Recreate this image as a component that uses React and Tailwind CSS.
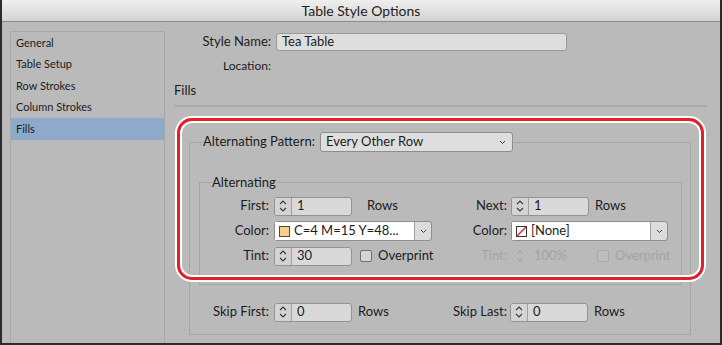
import React from 'react';

function UpDown({ disabled }) {
  const c = disabled ? '#a4a4a4' : '#3a3a3a';
  return (
    <svg width="8" height="14" viewBox="0 0 8 14" fill="none" stroke={c} strokeWidth="1.1">
      <path d="M1 5 L4 2 L7 5" />
      <path d="M1 9 L4 12 L7 9" />
    </svg>
  );
}

function ChevronDown() {
  return (
    <svg width="7" height="5" viewBox="0 0 7 5" fill="none" stroke="#444" strokeWidth="1">
      <path d="M1 1 L3.5 3.5 L6 1" />
    </svg>
  );
}

function Spinner({ value }) {
  return (
    <div className="flex h-[19px] w-[78px] overflow-hidden rounded-[3px] border border-[#939393] bg-[#d9d9d9]">
      <div className="flex w-[17px] items-center justify-center border-r border-[#a0a0a0] bg-[#d3d3d3]">
        <UpDown />
      </div>
      <div className="flex items-center pl-[5px]">{value}</div>
    </div>
  );
}

function Checkbox({ label, disabled }) {
  return (
    <div className={`flex items-center gap-[6px] ${disabled ? 'text-[#a3a3a3]' : ''}`}>
      <div
        className={`h-[12px] w-[12px] rounded-[2px] border ${
          disabled ? 'border-[#a9a9a9] bg-[#bdbdbd]' : 'border-[#707070] bg-[#d6d6d6]'
        }`}
      />
      {label}
    </div>
  );
}

function ColorSelect({ swatch, text, width, fieldWidth }) {
  return (
    <div className="flex h-[20px] rounded-[3px] border border-[#8e8e8e]" style={{ width }}>
      <div className="flex items-center gap-[4px] bg-white pl-[4px]" style={{ width: fieldWidth }}>
        {swatch}
        <span>{text}</span>
      </div>
      <div className="flex flex-1 items-center justify-center rounded-r-[3px] border-l border-[#a2a2a2] bg-[#dcdcdc]">
        <ChevronDown />
      </div>
    </div>
  );
}

const Label = ({ children, muted }) => (
  <div className={`w-[69px] text-right ${muted ? 'text-[#a3a3a3]' : ''}`}>{children}</div>
);

const navItems = ['General', 'Table Setup', 'Row Strokes', 'Column Strokes', 'Fills'];

export default function App() {
  return (
    <div className="relative flex h-[345px] w-[722px] flex-col border-x-2 border-b-2 border-[#2b2b2b] bg-[#bababa] font-[Lato,sans-serif] text-[13px] text-[#1c1c1c]">
      <div className="flex h-[22px] shrink-0 items-center justify-center border-b border-[#8a8a8a] bg-linear-to-b from-[#efefef] to-[#d3d3d3] text-[14px] text-[#222]">
        Table Style Options
      </div>

      <div className="flex flex-1">
        {/* left nav */}
        <div className="ml-[8px] mt-[9px] w-[155px] border-x border-t border-[#a8a8a8] text-[11px]">
          {navItems.map((item) => (
            <div
              key={item}
              className={`flex h-[21.5px] items-center pl-[5px] ${item === 'Fills' ? 'bg-[#8eaacb]' : ''}`}
            >
              {item}
            </div>
          ))}
        </div>

        {/* right panel */}
        <div className="flex flex-col pl-[9px] pt-[11px]">
          <div className="flex h-[18px] items-center">
            <div className="w-[97px] text-right">Style Name:</div>
            <div className="ml-[5px] flex h-[18px] w-[291px] items-center rounded-[3px] border border-[#9a9a9a] bg-[#dedede] pl-[5px]">
              Tea Table
            </div>
          </div>
          <div className="mt-[7px] flex h-[16px] items-center">
            <div className="w-[97px] text-right text-[12px]">Location:</div>
          </div>
          <div className="mt-[9px] flex h-[16px] items-center">Fills</div>
          <div className="mt-[6px] h-[2px] w-[533px] bg-[#a9a9a9]" />

          <fieldset className="ml-[15px] mt-[25px] w-[502px] border border-[#a6a6a6]">
            <legend className="ml-[12px] flex h-[20px] items-center px-[1px]">
              <span>Alternating Pattern:</span>
              <div className="ml-[5px] flex h-[20px] w-[193px] items-center justify-between rounded-[3px] border border-[#8e8e8e] bg-[#dedede] pl-[5px] pr-[6px]">
                <span>Every Other Row</span>
                <ChevronDown />
              </div>
            </legend>

            <fieldset className="ml-[9px] mr-[8px] mt-[22px] border border-[#a6a6a6]">
              <legend className="ml-[11px] h-[16px] px-[1px] leading-[16px]">Alternating</legend>
              <div className="flex flex-col gap-[5px] pb-[18px] pt-[6px]">
                <div className="flex h-[20px] items-center">
                  <div className="flex w-[238px] items-center">
                    <Label>First:</Label>
                    <div className="ml-[5px]"><Spinner value="1" /></div>
                    <span className="ml-[15px]">Rows</span>
                  </div>
                  <div className="flex items-center">
                    <Label>Next:</Label>
                    <div className="ml-[4px]"><Spinner value="1" /></div>
                    <span className="ml-[6px]">Rows</span>
                  </div>
                </div>

                <div className="flex h-[20px] items-center">
                  <div className="flex w-[238px] items-center">
                    <Label>Color:</Label>
                    <div className="ml-[5px]">
                      <ColorSelect
                        width={158}
                        fieldWidth={139}
                        text="C=4 M=15 Y=48..."
                        swatch={<div className="h-[11px] w-[11px] border border-[#4a4a4a] bg-[#f6cf8c]" />}
                      />
                    </div>
                  </div>
                  <div className="flex items-center">
                    <Label>Color:</Label>
                    <div className="ml-[4px]">
                      <ColorSelect
                        width={157}
                        fieldWidth={138}
                        text="[None]"
                        swatch={
                          <svg width="11" height="11" viewBox="0 0 11 11">
                            <rect x="0.5" y="0.5" width="10" height="10" fill="#fff" stroke="#333" />
                            <path d="M1 10 L10 1" stroke="#e0242b" strokeWidth="1.4" />
                          </svg>
                        }
                      />
                    </div>
                  </div>
                </div>

                <div className="flex h-[20px] items-center">
                  <div className="flex w-[238px] items-center">
                    <Label>Tint:</Label>
                    <div className="ml-[5px]"><Spinner value="30" /></div>
                    <div className="ml-[8px]"><Checkbox label="Overprint" /></div>
                  </div>
                  <div className="flex items-center">
                    <Label muted>Tint:</Label>
                    <div className="ml-[4px] flex h-[19px] w-[78px] items-center text-[#a3a3a3]">
                      <div className="flex w-[17px] justify-center"><UpDown disabled /></div>
                      <span className="pl-[6px]">100%</span>
                    </div>
                    <div className="ml-[8px]"><Checkbox label="Overprint" disabled /></div>
                  </div>
                </div>
              </div>
            </fieldset>

            <div className="mt-[17px] flex h-[20px] items-center pl-[10px]">
              <div className="flex w-[238px] items-center">
                <Label>Skip First:</Label>
                <div className="ml-[5px]"><Spinner value="0" /></div>
                <span className="ml-[6px]">Rows</span>
              </div>
              <div className="flex items-center">
                <Label>Skip Last:</Label>
                <div className="ml-[3px]"><Spinner value="0" /></div>
                <span className="ml-[6px]">Rows</span>
              </div>
            </div>
            <div className="h-[12px]" />
          </fieldset>
        </div>
      </div>

      {/* red highlight annotation */}
      <div className="pointer-events-none absolute left-[175px] top-[118px] h-[162px] w-[527px] rounded-[15px] border-[3px] border-[#e3202a] shadow-[0_0_0_2px_#fff,inset_0_0_0_2px_#fff]" />
    </div>
  );
}
